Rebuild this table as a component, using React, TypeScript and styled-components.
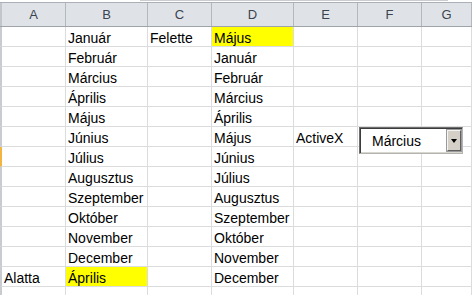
import React from 'react';
import styled, { createGlobalStyle } from 'styled-components';

const GlobalStyle = createGlobalStyle`
  html, body {
    margin: 0;
    padding: 0;
    background: #ffffff;
    overflow: hidden;
  }
  body {
    font-family: "Liberation Sans", Arial, sans-serif;
  }
`;

const COLUMNS = ['A', 'B', 'C', 'D', 'E', 'F', 'G'];
const TEMPLATE = '66px 82px 64px 82px 64px 64px 1fr';

type Row = string[];

const ROWS: Row[] = [
  ['', 'Január', 'Felette', 'Május'],
  ['', 'Február', '', 'Január'],
  ['', 'Március', '', 'Február'],
  ['', 'Április', '', 'Március'],
  ['', 'Május', '', 'Április'],
  ['', 'Június', '', 'Május', 'ActiveX'],
  ['', 'Július', '', 'Június'],
  ['', 'Augusztus', '', 'Július'],
  ['', 'Szeptember', '', 'Augusztus'],
  ['', 'Október', '', 'Szeptember'],
  ['', 'November', '', 'Október'],
  ['', 'December', '', 'November'],
  ['Alatta', 'Április', '', 'December'],
  [],
];

// [row, col] of yellow cells
const YELLOW = ['0:3', '12:1'];
const ACTIVE_ROW = 6;

const Sheet = styled.div`
  position: relative;
  width: 472px;
  height: 295px;
  overflow: hidden;
  background: #ffffff;
`;

const TopStrip = styled.div`
  height: 2px;
  display: flex;
`;

const FormulaEdge = styled.div`
  margin-left: 140px;
  width: 308px;
  border-bottom: 1px solid #c9ccd0;
  height: 0;
`;

const HeaderRow = styled.div`
  display: grid;
  grid-template-columns: ${TEMPLATE};
  height: 25px;
  box-sizing: border-box;
  border-top: 1px solid #abb0b6;
  border-bottom: 1px solid #9ea4aa;
  background: #dfe3e8;
`;

const HeaderCell = styled.div<{ $first?: boolean }>`
  box-sizing: border-box;
  border-right: 1px solid #b3b8be;
  border-left: ${_ => (_.$first ? '2px solid #c3c7cc' : 'none')};
  text-align: center;
  font-size: 13px;
  line-height: 18px;
  padding-top: 3px;
  color: #3c4350;
`;

const BodyRow = styled.div`
  display: grid;
  grid-template-columns: ${TEMPLATE};
  height: 20px;
`;

const Cell = styled.div<{ $first?: boolean; $yellow?: boolean; $active?: boolean }>`
  box-sizing: border-box;
  border-right: 1px solid #dadcdd;
  border-bottom: 1px solid #dadcdd;
  border-left: ${_ => (_.$first ? `2px solid ${_.$active ? '#f2b544' : '#c8ccd0'}` : 'none')};
  background: ${_ => (_.$yellow ? '#ffff00' : '#ffffff')};
  font-size: 14px;
  line-height: 16px;
  padding: 3px 0 0 2px;
  color: #000000;
  white-space: nowrap;
  overflow: hidden;
`;

const Combo = styled.div`
  position: absolute;
  left: 359px;
  top: 127px;
  width: 104px;
  height: 27px;
  box-sizing: border-box;
  border-top: 1px solid #6e6e6e;
  border-left: 1px solid #6e6e6e;
  border-bottom: 1px solid #b4b4b4;
  border-right: 1px solid #b4b4b4;
  box-shadow: inset 1px 1px 0 #3c3c3c, inset -1px -1px 0 #d8d5cf;
  background: #ffffff;
  display: flex;
  align-items: center;
  justify-content: space-between;
  padding: 0 1px 0 12px;
`;

const ComboText = styled.span`
  font-size: 14px;
  color: #000000;
  padding-top: 1px;
`;

const DropButton = styled.div`
  width: 14px;
  height: 21px;
  box-sizing: border-box;
  background: #d4d0c8;
  border-top: 1px solid #f4f4f4;
  border-left: 1px solid #f4f4f4;
  border-right: 1px solid #606060;
  border-bottom: 1px solid #606060;
  box-shadow: 0 0 0 1px #9a9a9a;
  display: flex;
  align-items: center;
  justify-content: center;
`;

const Arrow = styled.span`
  width: 0;
  height: 0;
  border-left: 3.5px solid transparent;
  border-right: 3.5px solid transparent;
  border-top: 4px solid #000000;
`;

export default function App() {
  return (
    <>
      <GlobalStyle />
      <Sheet>
        <TopStrip>
          <FormulaEdge />
        </TopStrip>
        <HeaderRow>
          {COLUMNS.map((c, i) => (
            <HeaderCell key={c} $first={i === 0}>{c}</HeaderCell>
          ))}
        </HeaderRow>
        {ROWS.map((row, r) => (
          <BodyRow key={r}>
            {COLUMNS.map((c, i) => (
              <Cell
                key={c}
                $first={i === 0}
                $active={r === ACTIVE_ROW}
                $yellow={YELLOW.includes(`${r}:${i}`)}
              >
                {row[i] || ''}
              </Cell>
            ))}
          </BodyRow>
        ))}
        <Combo>
          <ComboText>Március</ComboText>
          <DropButton>
            <Arrow />
          </DropButton>
        </Combo>
      </Sheet>
    </>
  );
}
